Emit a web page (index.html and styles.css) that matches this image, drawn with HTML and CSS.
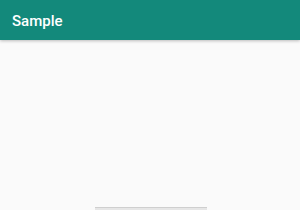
FILE: index.html
```html
<!DOCTYPE html>
<html>
<head>
<meta charset="utf-8">
<link rel="stylesheet" href="styles.css">
</head>
<body>
<div class="app">
  <header class="toolbar"><span class="title">Sample</span></header>
  <main class="content"></main>
  <div class="footer"><div class="sheet"></div></div>
</div>
</body>
</html>
```
FILE: styles.css
```css
html, body { margin: 0; padding: 0; }
body { width: 300px; height: 210px; overflow: hidden; background: #fafafa; font-family: Roboto, "Noto Sans", sans-serif; }
.app { display: flex; flex-direction: column; height: 210px; }
.toolbar { height: 40px; background: #13897b; display: flex; align-items: center; padding-left: 12px; padding-top: 1px; box-sizing: border-box; box-shadow: 0 1px 3px rgba(0,0,0,0.25); position: relative; z-index: 1; flex: none; }
.title { color: #fff; font-size: 15px; font-weight: 500; }
.content { flex: 1; }
.footer { display: flex; justify-content: center; height: 3px; flex: none; }
.sheet { width: 112px; margin-left: 2px; background: #e6e6e6; border-top: 1px solid #cfcfcf; }
```
